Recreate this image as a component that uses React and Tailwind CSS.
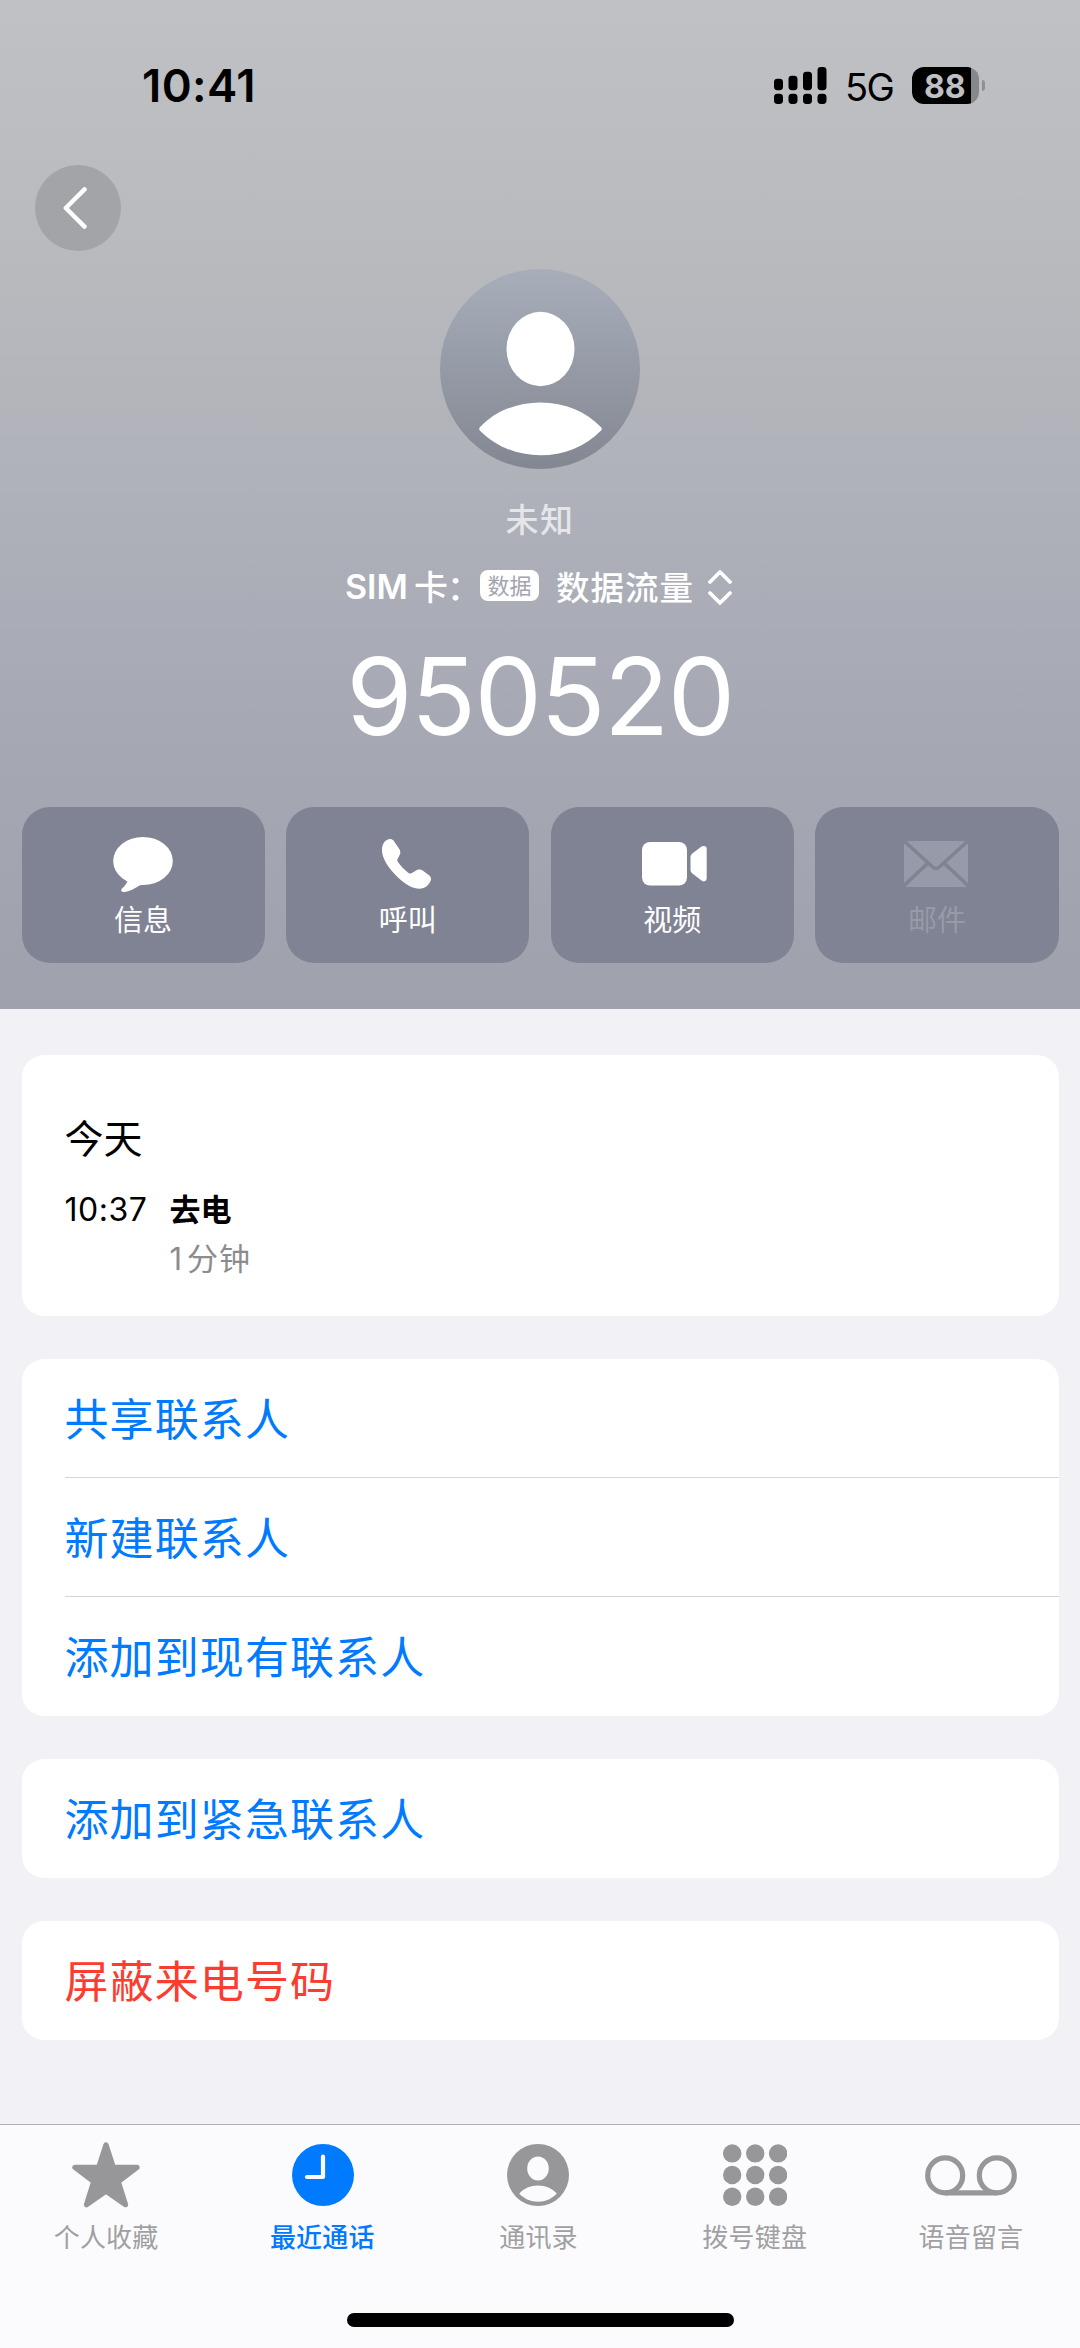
const ACTIONS = [
  { label: "信息", icon: MessageIcon },
  { label: "呼叫", icon: PhoneIcon },
  { label: "视频", icon: VideoIcon },
  { label: "邮件", icon: MailIcon, disabled: true },
];

const GROUPS = [
  { color: "text-[#007aff]", items: ["共享联系人", "新建联系人", "添加到现有联系人"] },
  { color: "text-[#007aff]", items: ["添加到紧急联系人"] },
  { color: "text-[#fb3c30]", items: ["屏蔽来电号码"] },
];

const TABS = [
  { label: "个人收藏", icon: StarIcon },
  { label: "最近通话", icon: ClockIcon, active: true },
  { label: "通讯录", icon: ContactIcon },
  { label: "拨号键盘", icon: KeypadIcon },
  { label: "语音留言", icon: VoicemailIcon },
];

function MessageIcon() {
  return (
    <svg className="mr-[1px]" width="60" height="55" viewBox="0 0 60 55" fill="currentColor">
      <ellipse cx="30" cy="24" rx="29.8" ry="24" />
      <path d="M14.5 44.5C13.5 47 11 49.5 9 51.5C7.5 53.2 8.3 55 11 55C16.5 54.6 22 51.5 26 48.7C28 47.8 30 48 30 48L14.5 40Z" />
    </svg>
  );
}

function PhoneIcon() {
  return (
    <svg className="mr-[2px]" width="49" height="50" viewBox="0 0 49 50" fill="currentColor">
      <path d="M8.5 0C10 0 11 1 12 2.2L16.8 9.2C18 11 18.8 13 18 15.3L15.6 20C15 21.3 15.2 22 15.8 22.8C19 27.5 22.5 31 26.5 34C27.5 34.7 28.3 34.8 29.5 34.2L35 31C37.3 30.2 39.3 30.6 41 31.8L47 36.2C48.6 37.5 49.2 39 48.9 40.8C47.5 46 43 49.7 37.5 49.7C31 49.7 24.5 46.5 16 38.5C6 28.5 0 19.5 0 11C0 5 3 0 8.5 0Z" />
    </svg>
  );
}

function VideoIcon() {
  return (
    <svg className="ml-[4px]" width="65" height="44" viewBox="0 0 65 44" fill="currentColor">
      <rect width="45" height="43.6" rx="8" />
      <path d="M48.5 15Q48.5 13 50 11.8L59.5 4.6Q61 3.8 62 3.9Q64.7 4 64.7 7V36.5Q64.7 39 62 39.4Q61 39.4 59.5 38.5L50 31.2Q48.5 30 48.5 28Z" />
    </svg>
  );
}

function MailIcon() {
  return (
    <svg className="mr-[1px]" width="64" height="46" viewBox="0 0 64 46" fill="none">
      <rect width="64" height="46" rx="4" fill="currentColor" />
      <path d="M-1 -1L28.6 26Q32 29 35.4 26L65 -1M23 23L-1 45.5M41 23L65 45.5" stroke="#808393" strokeWidth="3.6" />
    </svg>
  );
}

function StarIcon() {
  return (
    <svg width="68" height="66" viewBox="0 0 68 66" fill="currentColor" stroke="currentColor" strokeWidth="5.4" strokeLinejoin="round">
      <path d="M34 3L41.2 25.4H65L46.2 39.6L53.4 62.6L34 49L14.6 62.6L21.8 39.6L3 25.4H26.8Z" />
    </svg>
  );
}

function ClockIcon() {
  return (
    <svg className="ml-[1px]" width="62" height="62" viewBox="0 0 62 62" fill="none">
      <circle cx="31" cy="31" r="31" fill="currentColor" />
      <path d="M31 12.5V33H15" stroke="#fbfbfd" strokeWidth="4.2" strokeLinecap="round" strokeLinejoin="round" />
    </svg>
  );
}

function ContactIcon() {
  return (
    <svg width="62" height="62" viewBox="0 0 62 62" fill="#fbfbfd">
      <circle cx="31" cy="31" r="31" fill="currentColor" />
      <ellipse cx="31" cy="24.6" rx="10.8" ry="12" />
      <path d="M12.2 49.6C17 44.5 23.5 41.6 31 41.6C38.5 41.6 45 44.5 49.8 49.6C44.8 55 38.2 57.8 31 57.8C23.8 57.8 17.2 55 12.2 49.6Z" />
    </svg>
  );
}

function KeypadIcon() {
  const xs = [9.2, 32.2, 55.1];
  const ys = [9.4, 31, 52.7];
  return (
    <svg width="64" height="62" viewBox="0 0 64 62" fill="currentColor">
      {ys.map((cy) => xs.map((cx) => <circle key={`${cx}-${cy}`} cx={cx} cy={cy} r="9.2" />))}
    </svg>
  );
}

function VoicemailIcon() {
  return (
    <svg width="92" height="41" viewBox="0 0 92 41" fill="none" stroke="currentColor" strokeWidth="5.2">
      <circle cx="20.2" cy="20.4" r="17.5" />
      <circle cx="71.8" cy="20.4" r="17.5" />
      <path d="M20.2 37.9H71.8" />
    </svg>
  );
}

function SignalIcon() {
  const tops = [11.7, 8.7, 4.7, 0];
  return (
    <svg width="53" height="37" viewBox="0 0 53 37">
      {tops.map((y, i) => (
        <g key={i}>
          <rect x={i * 14.5} y={y} width="9" height={23.2 - y} rx="3.4" />
          <rect x={i * 14.5} y="26.8" width="9" height="10.2" rx="3.4" />
        </g>
      ))}
    </svg>
  );
}

function StatusBar() {
  return (
    <div className="flex h-[165px] items-center pt-[6px] pl-[142px] pr-[95px] text-black">
      <div className="pt-[1px] text-[45.5px] leading-[50px] font-semibold tracking-[0.4px]">10:41</div>
      <div className="ml-auto flex items-center">
        <SignalIcon />
        <span className="ml-[18px] w-[49px] pt-[2px] text-[38px] leading-[44px] tracking-[-1.6px]">5G</span>
        <div className="ml-[18px] flex h-[37px] w-[67px] items-center overflow-hidden rounded-[12px] bg-[linear-gradient(to_right,#000_59px,#87888b_59px)] pl-[12px]">
          <span className="pt-[1px] text-[32px] leading-[37px] font-bold text-[#bfc0c3]">88</span>
        </div>
        <div className="ml-[3px] h-[11px] w-[3px] rounded-r-full bg-[#8f9093]" />
      </div>
    </div>
  );
}

function Avatar() {
  return (
    <div className="mx-auto mt-[18px] size-[200px] rounded-full bg-linear-to-b from-[#a7aeba] to-[#838792]">
      <svg width="200" height="200" viewBox="0 0 200 200" fill="#fff">
        <ellipse cx="100.5" cy="80" rx="34" ry="37.2" />
        <path d="M39.9 158.2C55 142.5 76 133.4 100.5 133.4C125 133.4 146 142.5 161.1 158.2Q162.5 160 161.1 161.4C145 177.5 124 186.3 100.5 186.3C77 186.3 56 177.5 39.9 161.4Q38.5 160 39.9 158.2Z" />
      </svg>
    </div>
  );
}

function Header() {
  return (
    <header className="flex h-[1009px] shrink-0 flex-col bg-[linear-gradient(to_bottom,#c0c1c4_0%,#b8b9bd_28%,#acafb8_55%,#a5a7b3_75%,#9fa1ac_100%)]">
      <StatusBar />
      <button className="ml-[35px] flex size-[86px] shrink-0 items-center justify-center rounded-full bg-[#a3a4a7]">
        <svg className="mr-[6px]" width="24" height="42" viewBox="0 0 24 42" fill="none" stroke="#fff" strokeWidth="4.4" strokeLinecap="round" strokeLinejoin="round">
          <path d="M21.5 2.4L2.8 21L21.5 39.6" />
        </svg>
      </button>
      <Avatar />
      <div className="mt-[31px] text-center text-[33px] leading-[40px] font-medium tracking-[1.4px] text-white/70">未知</div>
      <div className="mt-[27px] flex h-[40px] items-center pl-[345px] text-[34px] leading-[40px] font-medium text-white">
        <span className="w-[69px] font-semibold">SIM</span>
        <span className="w-[66px] pt-[2px] tracking-[-1px] whitespace-nowrap">卡：</span>
        <span className="mb-[4px] flex h-[31px] w-[59px] items-center justify-center rounded-[8px] bg-white pt-[2px] text-[22px] leading-[30px] font-normal text-[#a3a5ae]">数据</span>
        <span className="ml-[17px] pt-[2px] text-[33.5px] tracking-[1px]">数据流量</span>
        <svg className="ml-[13px]" width="26" height="36" viewBox="0 0 26 36" fill="none" stroke="#fff" strokeWidth="3.8" strokeLinecap="round" strokeLinejoin="round">
          <path d="M3 13L13 3L23 13M3 24L13 34L23 24" />
        </svg>
      </div>
      <div className="mt-[33px] text-center text-[107px] leading-[112px] tracking-[-1.5px] text-white">950520</div>
      <div className="mt-[55px] grid grid-cols-4 gap-[21.5px] px-[21.5px]">
        {ACTIONS.map((a) => (
          <button
            key={a.label}
            className={`flex h-[156px] flex-col items-center rounded-[28px] bg-[#808393] pt-[23px] ${a.disabled ? "text-[#979aa8]" : "text-white"}`}
          >
            <span className="flex h-[68px] items-center"><a.icon /></span>
            <span className="mt-[5px] text-[29px] leading-[36px]">{a.label}</span>
          </button>
        ))}
      </div>
    </header>
  );
}

function CallLog() {
  return (
    <section className="h-[261px] rounded-[22px] bg-white pt-[61px] pl-[43px] text-black">
      <div className="text-[39px] leading-[46px]">今天</div>
      <div className="mt-[28px] flex text-[31px]">
        <div className="w-[105px] text-[32px] leading-[40px] tracking-[0.5px]">10:37</div>
        <div>
          <div className="leading-[40px] font-bold">去电</div>
          <div className="mt-[11px] leading-[36px] tracking-[1px] text-[#8c8c8e]">
            <span className="mr-[4px]">1</span>分钟
          </div>
        </div>
      </div>
    </section>
  );
}

function LinkGroup({ color, items }) {
  return (
    <section className="rounded-[22px] bg-white pl-[43px]">
      {items.map((item, i) => (
        <div
          key={item}
          className={`h-[119px] pt-[3px] text-[44px] leading-[117px] tracking-[1.1px] ${color} ${i < items.length - 1 ? "border-b border-[#d6d6d9]" : ""}`}
        >
          {item}
        </div>
      ))}
    </section>
  );
}

function TabBar() {
  return (
    <nav className="mt-auto flex h-[224px] flex-col border-t-[1.5px] border-[#b1b1b8] bg-[#fbfbfd]">
      <div className="mr-[1px] -ml-[2px] grid grid-cols-5 pt-[12px]">
        {TABS.map((t) => (
          <div key={t.label} className={`flex flex-col items-center ${t.active ? "text-[#007aff]" : "text-[#979799]"}`}>
            <span className="flex h-[76px] items-center"><t.icon /></span>
            <span className={`mt-[9px] text-[26px] leading-[32px] tracking-[0.2px] ${t.active ? "font-medium" : "text-[#a0a0a2]"}`}>{t.label}</span>
          </div>
        ))}
      </div>
      <div className="mx-auto mt-auto mb-[21px] h-[14px] w-[387px] rounded-full bg-black" />
    </nav>
  );
}

export default function App() {
  return (
    <div className="flex h-[2348px] w-[1080px] flex-col overflow-hidden bg-[#f1f1f6] font-['Inter','Noto_Sans_CJK_SC',sans-serif]">
      <Header />
      <main className="flex flex-col gap-[43px] px-[21.5px] pt-[46px]">
        <CallLog />
        {GROUPS.map((g) => (
          <LinkGroup key={g.items[0]} color={g.color} items={g.items} />
        ))}
      </main>
      <TabBar />
    </div>
  );
}
